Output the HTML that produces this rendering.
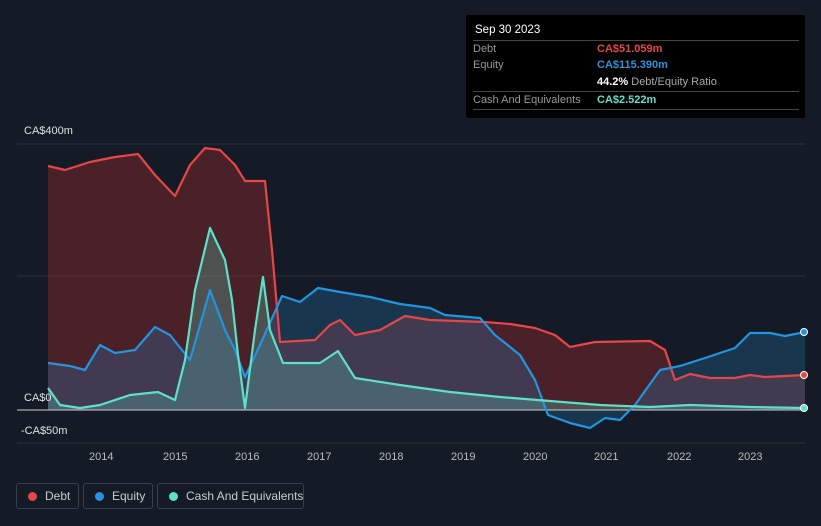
<!DOCTYPE html>
<html><head><meta charset="utf-8"><style>
body{margin:0;width:821px;height:526px;background:#151b26;font-family:"Liberation Sans",sans-serif;overflow:hidden;position:relative}
.tt{position:absolute;left:466px;top:15px;width:339px;height:103px;background:#000;border-radius:2px}
.tt .h{position:absolute;left:9px;top:9px;color:#fff;font-size:11.5px}
.tt .r{position:absolute;left:7px;width:326px;border-top:1px solid #444;font-size:11px;color:#999;height:17px;line-height:17px}
.tt .r span{position:absolute;left:124px;font-weight:bold}
.lg{position:absolute;top:483px;height:26px;border:1px solid #3a404c;border-radius:3px;color:#c8ccd2;font-size:12px;line-height:24px;box-sizing:border-box;white-space:nowrap;padding-left:28px}
.lg i{position:absolute;left:11px;top:8px;width:9px;height:9px;border-radius:50%}
.ax{position:absolute;color:#e0e0e0;font-size:11px}
.yr{position:absolute;top:451px;color:#bbb;font-size:11px}
</style></head><body>
<svg width="821" height="526" style="position:absolute;left:0;top:0">
<line x1="17" y1="144" x2="805" y2="144" stroke="#2a303b"/>
<line x1="17" y1="276" x2="805" y2="276" stroke="#2a303b"/>
<line x1="17" y1="443" x2="805" y2="443" stroke="#2a303b"/>
<polygon fill="rgba(200,50,50,0.3)" points="48,166 65,170 90,162 115,157 138,154 155,175 175,196 190,165 205,148 220,150 235,165 245,181 265,181 272,250 280,342 315,340 330,325 340,320 355,335 380,330 405,316 430,320 485,322 510,324 535,328 555,335 570,347 595,342 650,341 665,350 675,380 690,374 710,378 735,378 750,375 765,377 805,375 805,410 48,410"/>
<polygon fill="rgba(35,148,223,0.22)" points="48,363 70,366 85,370 100,345 115,353 135,350 155,327 170,335 190,360 210,290 225,330 235,350 245,377 260,345 282,296 300,302 318,288 340,292 370,297 400,304 430,308 445,315 480,318 495,335 520,355 535,380 548,415 570,423 590,428 605,418 620,420 635,405 660,370 680,366 705,358 735,348 750,333 770,333 785,336 805,332 805,410 48,410"/>
<polygon fill="rgba(94,224,200,0.25)" points="48,388 60,405 80,408 100,405 130,395 158,392 175,400 185,360 195,290 210,228 225,260 232,300 238,355 245,408 255,330 263,277 270,330 283,363 320,363 338,351 355,378 400,385 450,392 500,397 550,401 600,405 650,407 690,405 750,407 805,408 805,410 48,410"/>
<line x1="17" y1="410" x2="805" y2="410" stroke="#ccc" stroke-width="1"/>
<polyline fill="none" stroke="#e64646" stroke-width="2.2" stroke-linejoin="round" points="48,166 65,170 90,162 115,157 138,154 155,175 175,196 190,165 205,148 220,150 235,165 245,181 265,181 272,250 280,342 315,340 330,325 340,320 355,335 380,330 405,316 430,320 485,322 510,324 535,328 555,335 570,347 595,342 650,341 665,350 675,380 690,374 710,378 735,378 750,375 765,377 805,375"/>
<polyline fill="none" stroke="#2394df" stroke-width="2.2" stroke-linejoin="round" points="48,363 70,366 85,370 100,345 115,353 135,350 155,327 170,335 190,360 210,290 225,330 235,350 245,377 260,345 282,296 300,302 318,288 340,292 370,297 400,304 430,308 445,315 480,318 495,335 520,355 535,380 548,415 570,423 590,428 605,418 620,420 635,405 660,370 680,366 705,358 735,348 750,333 770,333 785,336 805,332"/>
<polyline fill="none" stroke="#5ee0c8" stroke-width="2.2" stroke-linejoin="round" points="48,388 60,405 80,408 100,405 130,395 158,392 175,400 185,360 195,290 210,228 225,260 232,300 238,355 245,408 255,330 263,277 270,330 283,363 320,363 338,351 355,378 400,385 450,392 500,397 550,401 600,405 650,407 690,405 750,407 805,408"/>
<circle cx="804" cy="375" r="3.5" fill="#e64646" stroke="#fff" stroke-width="1"/>
<circle cx="804" cy="332" r="3.5" fill="#2394df" stroke="#fff" stroke-width="1"/>
<circle cx="804" cy="408" r="3.5" fill="#5ee0c8" stroke="#fff" stroke-width="1"/>
</svg>
<div class="ax" style="left:24px;top:125px">CA$400m</div>
<div class="ax" style="left:24px;top:392px">CA$0</div>
<div class="ax" style="left:21px;top:425px">-CA$50m</div>
<div class="yr" style="left:89px">2014</div><div class="yr" style="left:163px">2015</div><div class="yr" style="left:235px">2016</div><div class="yr" style="left:307px">2017</div><div class="yr" style="left:379px">2018</div><div class="yr" style="left:451px">2019</div><div class="yr" style="left:523px">2020</div><div class="yr" style="left:594px">2021</div><div class="yr" style="left:667px">2022</div><div class="yr" style="left:738px">2023</div>
<div class="tt"><div class="h">Sep 30 2023</div>
<div class="r" style="top:25px">Debt<span style="color:#e64646">CA$51.059m</span></div>
<div class="r" style="top:42px;border:none">Equity<span style="color:#2394df">CA$115.390m</span></div>
<div class="r" style="top:59px;border:none"><span style="color:#fff">44.2% <b style="color:#aaa;font-weight:normal">Debt/Equity Ratio</b></span></div>
<div class="r" style="top:76px">Cash And Equivalents<span style="color:#5ee0c8">CA$2.522m</span></div>
<div class="r" style="top:94px;height:0"></div>
</div>
<div class="lg" style="left:16px;width:63px"><i style="background:#e64646"></i>Debt</div>
<div class="lg" style="left:83px;width:70px"><i style="background:#2394df"></i>Equity</div>
<div class="lg" style="left:157px;width:147px"><i style="background:#5ee0c8"></i>Cash And Equivalents</div>
</body></html>
